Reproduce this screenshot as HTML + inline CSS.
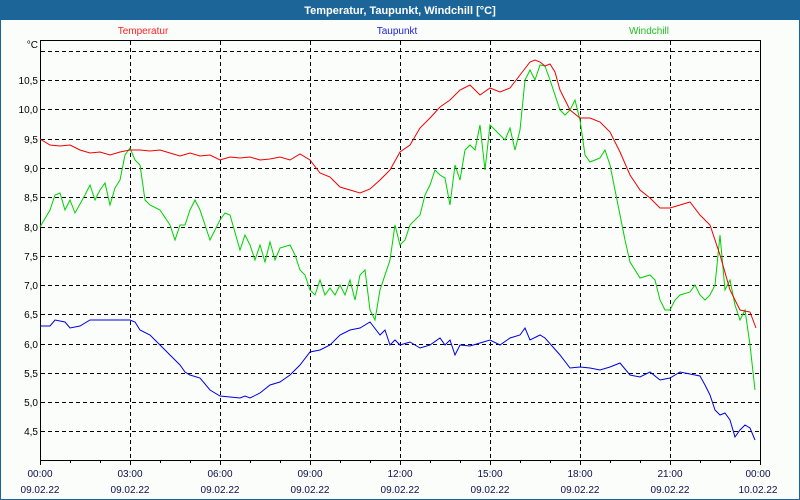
<!DOCTYPE html>
<html><head><meta charset="utf-8"><style>
html,body{margin:0;padding:0;width:800px;height:500px;overflow:hidden;background:#fbfdfb}
svg{display:block}
text{font-family:"Liberation Sans",sans-serif;font-size:10px}
</style></head><body>
<svg width="800" height="500" viewBox="0 0 800 500">
<rect x="0" y="0" width="800" height="500" fill="#fbfdfb"/>
<rect x="0" y="0" width="800" height="20" fill="#1c6599"/>
<rect x="0" y="0" width="1" height="500" fill="#1c6599"/>
<rect x="799" y="0" width="1" height="500" fill="#1c6599"/>
<rect x="0" y="499" width="800" height="1" fill="#1c6599"/>
<text x="400" y="14" text-anchor="middle" fill="#fff" font-weight="bold" style="font-size:11px">Temperatur, Taupunkt, Windchill [°C]</text>
<text x="143" y="34" text-anchor="middle" fill="#ff2020">Temperatur</text>
<text x="397" y="34" text-anchor="middle" fill="#2020e0">Taupunkt</text>
<text x="649" y="34" text-anchor="middle" fill="#20c020">Windchill</text>
<g stroke="#000" stroke-dasharray="4,3" stroke-width="1">
<line x1="41" x2="759" y1="51.5" y2="51.5"/><line x1="41" x2="759" y1="80.5" y2="80.5"/>
<line x1="41" x2="759" y1="109.5" y2="109.5"/><line x1="41" x2="759" y1="139.5" y2="139.5"/>
<line x1="41" x2="759" y1="168.5" y2="168.5"/><line x1="41" x2="759" y1="197.5" y2="197.5"/>
<line x1="41" x2="759" y1="227.5" y2="227.5"/><line x1="41" x2="759" y1="256.5" y2="256.5"/>
<line x1="41" x2="759" y1="285.5" y2="285.5"/><line x1="41" x2="759" y1="314.5" y2="314.5"/>
<line x1="41" x2="759" y1="344.5" y2="344.5"/><line x1="41" x2="759" y1="373.5" y2="373.5"/>
<line x1="41" x2="759" y1="402.5" y2="402.5"/><line x1="41" x2="759" y1="431.5" y2="431.5"/>
<line x1="130.5" x2="130.5" y1="41" y2="460"/><line x1="220.5" x2="220.5" y1="41" y2="460"/>
<line x1="310.5" x2="310.5" y1="41" y2="460"/><line x1="400.5" x2="400.5" y1="41" y2="460"/>
<line x1="490.5" x2="490.5" y1="41" y2="460"/><line x1="580.5" x2="580.5" y1="41" y2="460"/>
<line x1="670.5" x2="670.5" y1="41" y2="460"/>
</g>
<rect x="40.5" y="40.5" width="720" height="420" fill="none" stroke="#000" stroke-width="1"/>
<g stroke="#000">
<path d="M40.5 460v5M70.5 460v3M100.5 460v3M130.5 460v5M160.5 460v3M190.5 460v3M220.5 460v5M250.5 460v3M280.5 460v3M310.5 460v5M340.5 460v3M370.5 460v3M400.5 460v5M430.5 460v3M460.5 460v3M490.5 460v5M520.5 460v3M550.5 460v3M580.5 460v5M610.5 460v3M640.5 460v3M670.5 460v5M700.5 460v3M730.5 460v3M760.5 460v5"/>
</g>
<g fill="#000" text-anchor="end">
<text x="38" y="48">°C</text>
<text x="38" y="84">10,5</text><text x="38" y="113">10,0</text><text x="38" y="143">9,5</text>
<text x="38" y="172">9,0</text><text x="38" y="201">8,5</text><text x="38" y="231">8,0</text>
<text x="38" y="260">7,5</text><text x="38" y="289">7,0</text><text x="38" y="318">6,5</text>
<text x="38" y="348">6,0</text><text x="38" y="377">5,5</text><text x="38" y="406">5,0</text>
<text x="38" y="435">4,5</text>
</g>
<g fill="#10104a" text-anchor="middle">
<text x="40" y="477">00:00</text><text x="130" y="477">03:00</text><text x="220" y="477">06:00</text><text x="310" y="477">09:00</text><text x="400" y="477">12:00</text><text x="490" y="477">15:00</text><text x="580" y="477">18:00</text><text x="670" y="477">21:00</text><text x="758" y="477">00:00</text>
<text x="40" y="493">09.02.22</text><text x="130" y="493">09.02.22</text><text x="220" y="493">09.02.22</text><text x="310" y="493">09.02.22</text><text x="400" y="493">09.02.22</text><text x="490" y="493">09.02.22</text><text x="580" y="493">09.02.22</text><text x="670" y="493">09.02.22</text><text x="758" y="493">10.02.22</text>
</g>
<g fill="none" stroke-width="1">
<polyline stroke="#0000e0" points="40,326 50,326 55,320 65,322 70,328 80,326 90,320 130,320 135,322 140,330 150,335 160,345 170,355 180,365 185,372 190,375 200,378 210,390 220,396 240,398 245,396 250,398 260,393 270,385 280,382 290,375 300,365 310,352 320,350 330,345 340,335 350,330 360,328 370,322 380,335 385,330 390,345 395,340 400,345 410,342 420,348 430,345 440,338 445,345 450,340 455,355 460,345 470,346 480,343 490,340 500,345 510,338 520,335 525,328 530,340 540,335 545,338 560,355 570,368 580,367 590,368 600,370 610,367 620,363 630,375 640,377 650,372 660,380 670,378 680,372 690,374 700,376 705,385 710,395 715,410 720,415 725,413 730,420 735,437 740,430 745,425 750,428 755,440"/>
<polyline stroke="#00d000" points="40,227 50,210 55,195 60,193 65,210 70,200 75,213 85,195 90,185 95,200 100,190 105,183 110,205 115,188 120,180 125,155 130,148 135,160 140,165 145,200 150,205 160,210 170,225 175,240 180,225 185,225 190,210 195,200 200,210 210,240 220,220 225,213 230,215 240,250 245,235 250,245 255,260 260,245 265,262 270,242 275,260 280,248 290,245 295,255 300,270 305,275 310,290 315,295 320,280 325,295 330,288 335,295 340,285 345,295 350,280 355,300 360,275 365,270 370,310 375,320 380,290 390,260 395,225 400,245 405,240 410,225 420,215 425,195 430,185 435,170 440,175 445,178 450,205 455,165 460,180 465,150 470,145 475,150 480,125 485,170 490,125 495,130 500,135 505,140 510,128 515,150 520,130 525,80 530,70 535,80 540,65 545,66 550,80 560,110 565,115 570,110 575,100 580,120 585,155 590,162 595,160 600,158 605,150 610,165 615,190 620,215 625,240 630,262 640,278 650,275 655,280 660,300 665,310 670,310 675,300 680,295 690,292 695,285 700,295 705,300 710,295 715,285 720,235 725,290 730,280 735,305 740,320 745,310 750,345 755,390"/>
<polyline stroke="#f00000" points="40,139 50,145 60,146 70,145 80,150 90,153 100,152 110,155 120,152 130,150 140,150 150,151 160,150 170,153 180,156 190,153 200,156 210,155 220,160 230,157 240,158 250,157 260,160 270,159 280,157 290,160 300,154 310,160 320,173 330,177 340,187 350,190 360,193 370,189 380,180 390,170 400,152 410,145 420,128 430,118 440,107 450,100 460,90 470,85 480,95 490,88 500,92 510,88 520,75 530,62 535,60 540,62 545,66 550,64 555,72 560,90 570,110 580,118 590,118 600,122 610,132 620,152 630,175 640,190 650,198 660,208 670,208 680,205 690,202 700,215 710,225 720,255 730,290 740,310 750,312 756,328"/>
</g>
</svg>
</body></html>
